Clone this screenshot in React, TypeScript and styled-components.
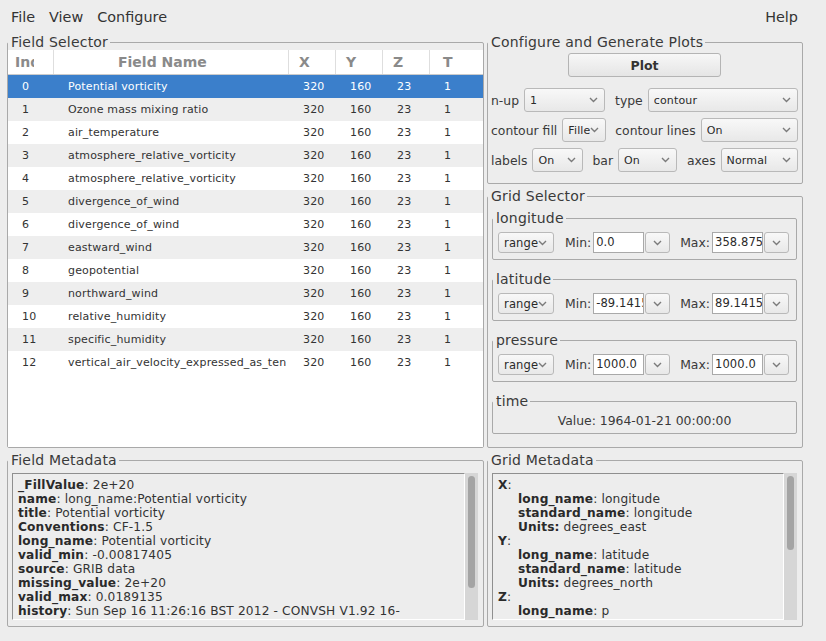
import React from 'react'
import styled, { createGlobalStyle } from 'styled-components'

const GlobalStyle = createGlobalStyle`
  html, body {
    margin: 0;
    padding: 0;
    background: #ededed;
  }
  body {
    font-family: "DejaVu Sans", "Liberation Sans", sans-serif;
    color: #333;
  }
`

const Window = styled.div`
  width: 826px;
  height: 641px;
  overflow: hidden;
  background: #ededed;
`

const MenuBar = styled.div`
  display: flex;
  align-items: center;
  height: 34px;
  padding: 0 21px 0 4px;
  font-size: 14.4px;
  color: #333;
`

const MenuItem = styled.span<{ $push?: boolean }>`
  padding: 0 7px;
  margin-left: ${(p) => (p.$push ? 'auto' : '0')};
`

const Main = styled.div`
  display: grid;
  grid-template-columns: 477px 316px;
  grid-template-rows: 414px 175px;
  column-gap: 3px;
  row-gap: 4px;
  padding-left: 7px;
`

const Column = styled.div`
  display: flex;
  flex-direction: column;
  gap: 4px;
  min-height: 0;
`

const Panel = styled.fieldset<{ $h?: number }>`
  margin: 0;
  padding: 0;
  min-width: 0;
  min-height: 0;
  border: 1px solid #a9a9a9;
  border-radius: 2px;
  display: flex;
  flex-direction: column;
  ${(p) => (p.$h ? `height: ${p.$h}px; flex: none;` : 'flex: 1;')}
  box-sizing: border-box;
`

const Legend = styled.legend`
  margin: 0;
  padding: 0 2px 0 3px;
  font-size: 14px;
  letter-spacing: 0.2px;
  line-height: 16px;
  color: #3a3a3a;
`

/* ---------- table ---------- */

const cols = '46px 235px 47px 47px 47px 1fr'

const Table = styled.div`
  flex: 1;
  background: #fff;
  display: flex;
  flex-direction: column;
  overflow: hidden;
`

const HeaderRow = styled.div`
  display: grid;
  grid-template-columns: ${cols};
  height: 25px;
  box-sizing: border-box;
  border-bottom: 1px solid #cbcbcb;
`

const HeaderCell = styled.div<{ $pad: number; $last?: boolean }>`
  padding-left: ${(p) => p.$pad}px;
  border-right: ${(p) => (p.$last ? 'none' : '1px solid #dedede')};
  font-weight: bold;
  font-size: 14px;
  line-height: 24px;
  color: #8a8a8a;
  overflow: hidden;
  white-space: nowrap;
`

const HeaderClip = styled.span`
  display: inline-block;
  width: 19px;
  overflow: hidden;
  vertical-align: top;
`

const Row = styled.div<{ $alt: boolean; $sel: boolean }>`
  display: grid;
  grid-template-columns: ${cols};
  height: 23px;
  flex: none;
  background: ${(p) => (p.$sel ? '#3b7fcb' : p.$alt ? '#eeeeee' : '#ffffff')};
  color: ${(p) => (p.$sel ? '#ffffff' : '#333333')};
  font-size: 11px;
  letter-spacing: 0.15px;
  line-height: 23px;
`

const Cell = styled.div`
  padding-left: 14px;
  white-space: nowrap;
  overflow: hidden;
`

/* ---------- controls ---------- */

const ConfigBody = styled.div`
  padding: 3px 4px 0 3px;
  display: flex;
  flex-direction: column;
`

const PlotButton = styled.button`
  align-self: center;
  width: 153px;
  height: 24px;
  border: 1px solid #b4b4b4;
  border-radius: 3px;
  background: linear-gradient(#f7f7f7, #e5e5e5);
  font-family: inherit;
  font-weight: bold;
  font-size: 12.5px;
  color: #333;
  padding: 0;
`

const FormRow = styled.div<{ $first?: boolean }>`
  display: flex;
  align-items: center;
  gap: 5px;
  height: 24px;
  margin-top: ${(p) => (p.$first ? 11 : 6)}px;
`

const Label = styled.span<{ $ml?: number }>`
  margin-left: ${(p) => p.$ml ?? 0}px;
  white-space: nowrap;
  color: #3a3a3a;
  font-size: 12.4px;
`

const Combo = styled.div<{ $w?: number; $h?: number; $fs?: number }>`
  display: flex;
  align-items: center;
  box-sizing: border-box;
  ${(p) => (p.$w ? `width: ${p.$w}px; flex: none;` : 'flex: 1;')}
  height: ${(p) => p.$h ?? 24}px;
  padding: 0 6px 0 5px;
  border: 1px solid #b9b9b9;
  border-radius: 3px;
  background: linear-gradient(#f8f8f8, #e8e8e8);
  font-size: ${(p) => p.$fs ?? 11}px;
  letter-spacing: 0.15px;
  color: #2a2a2a;
`

const ComboText = styled.span`
  flex: 1;
  min-width: 0;
  overflow: hidden;
  white-space: nowrap;
`

const ArrowButton = styled.div`
  display: flex;
  align-items: center;
  justify-content: center;
  width: 25px;
  height: 21px;
  margin-left: 1px;
  box-sizing: border-box;
  border: 1px solid #b9b9b9;
  border-radius: 3px;
  background: linear-gradient(#f8f8f8, #e8e8e8);
`

const TextField = styled.div`
  width: 51px;
  height: 21px;
  margin-left: 2px;
  box-sizing: border-box;
  border: 1px solid #a9a9a9;
  background: #fff;
  padding-left: 2px;
  font-size: 11.5px;
  letter-spacing: 0.1px;
  line-height: 19px;
  color: #2a2a2a;
  white-space: nowrap;
  overflow: hidden;
`

const GridBody = styled.div`
  padding: 6px 5px 0 4px;
  display: flex;
  flex-direction: column;
  gap: 11px;
`

const RangeRow = styled.div`
  display: flex;
  align-items: center;
  padding: 6px 5px 6px 5px;
`

const TimeValue = styled.div`
  text-align: center;
  font-size: 12.4px;
  line-height: 16px;
  padding: 4px 0 4px;
  color: #3a3a3a;
`

/* ---------- metadata ---------- */

const MetaBody = styled.div`
  flex: 1;
  display: flex;
  padding: 5px 5px 6px 4px;
  min-height: 0;
`

const TextView = styled.div`
  flex: 1;
  min-width: 0;
  border-top: 1px solid #8f8f8f;
  border-left: 1px solid #8f8f8f;
  border-right: 1px solid #ffffff;
  border-bottom: 1px solid #ffffff;
  padding: 4px 5px;
  overflow: hidden;
  font-size: 12.2px;
  letter-spacing: 0.14px;
  line-height: 14px;
  color: #333;
`

const MetaLine = styled.div<{ $indent?: boolean }>`
  white-space: nowrap;
  padding-left: ${(p) => (p.$indent ? 20 : 0)}px;
  b {
    color: #2a2a2a;
  }
`

const Scrollbar = styled.div`
  width: 13px;
  flex: none;
  background: #d6d6d6;
  padding: 3px;
  box-sizing: border-box;
`

const Thumb = styled.div<{ $h: number }>`
  height: ${(p) => p.$h}px;
  background: #a4a4a4;
  border-radius: 4px;
`

const Chevron: React.FC = () => (
  <svg width="9" height="6" viewBox="0 0 9 6">
    <polyline points="1,1 4.5,4.5 8,1" fill="none" stroke="#7b7b7b" strokeWidth="1.4" />
  </svg>
)

const fields = [
  'Potential vorticity',
  'Ozone mass mixing ratio',
  'air_temperature',
  'atmosphere_relative_vorticity',
  'atmosphere_relative_vorticity',
  'divergence_of_wind',
  'divergence_of_wind',
  'eastward_wind',
  'geopotential',
  'northward_wind',
  'relative_humidity',
  'specific_humidity',
  'vertical_air_velocity_expressed_as_ten',
]

const fieldMeta: [string, string][] = [
  ['_FillValue', '2e+20'],
  ['name', 'long_name:Potential vorticity'],
  ['title', 'Potential vorticity'],
  ['Conventions', 'CF-1.5'],
  ['long_name', 'Potential vorticity'],
  ['valid_min', '-0.00817405'],
  ['source', 'GRIB data'],
  ['missing_value', '2e+20'],
  ['valid_max', '0.0189135'],
  ['history', 'Sun Sep 16 11:26:16 BST 2012 - CONVSH V1.92 16-'],
]

const gridMeta = [
  { axis: 'X', name: 'longitude', std: 'longitude', units: 'degrees_east' },
  { axis: 'Y', name: 'latitude', std: 'latitude', units: 'degrees_north' },
  { axis: 'Z', name: 'p', std: 'pressure', units: 'hPa' },
]

const ranges = [
  { name: 'longitude', min: '0.0', max: '358.875' },
  { name: 'latitude', min: '-89.14159', max: '89.14159' },
  { name: 'pressure', min: '1000.0', max: '1000.0' },
]

const FieldTable: React.FC = () => (
  <Table>
    <HeaderRow>
      <HeaderCell $pad={7}>
        <HeaderClip>Index</HeaderClip>
      </HeaderCell>
      <HeaderCell $pad={64}>Field Name</HeaderCell>
      <HeaderCell $pad={10}>X</HeaderCell>
      <HeaderCell $pad={10}>Y</HeaderCell>
      <HeaderCell $pad={10}>Z</HeaderCell>
      <HeaderCell $pad={13} $last>
        T
      </HeaderCell>
    </HeaderRow>
    {fields.map((f, i) => (
      <Row key={i} $alt={i % 2 === 1} $sel={i === 0}>
        <Cell>{i}</Cell>
        <Cell>{f}</Cell>
        <Cell>320</Cell>
        <Cell>160</Cell>
        <Cell>23</Cell>
        <Cell>1</Cell>
      </Row>
    ))}
  </Table>
)

const ConfigPanel: React.FC = () => (
  <Panel $h={150}>
    <Legend>Configure and Generate Plots</Legend>
    <ConfigBody>
      <PlotButton>Plot</PlotButton>
      <FormRow $first>
        <Label>n-up</Label>
        <Combo $w={81}>
          <ComboText>1</ComboText>
          <Chevron />
        </Combo>
        <Label $ml={5}>type</Label>
        <Combo>
          <ComboText>contour</ComboText>
          <Chevron />
        </Combo>
      </FormRow>
      <FormRow>
        <Label>contour fill</Label>
        <Combo $w={44}>
          <ComboText>Filled</ComboText>
          <Chevron />
        </Combo>
        <Label $ml={4}>contour lines</Label>
        <Combo>
          <ComboText>On</ComboText>
          <Chevron />
        </Combo>
      </FormRow>
      <FormRow>
        <Label>labels</Label>
        <Combo $w={51}>
          <ComboText>On</ComboText>
          <Chevron />
        </Combo>
        <Label $ml={4}>bar</Label>
        <Combo $w={59}>
          <ComboText>On</ComboText>
          <Chevron />
        </Combo>
        <Label $ml={5}>axes</Label>
        <Combo>
          <ComboText>Normal</ComboText>
          <Chevron />
        </Combo>
      </FormRow>
    </ConfigBody>
  </Panel>
)

const GridSelector: React.FC = () => (
  <Panel>
    <Legend>Grid Selector</Legend>
    <GridBody>
      {ranges.map((r) => (
        <Panel key={r.name} $h={50}>
          <Legend>{r.name}</Legend>
          <RangeRow>
            <Combo $w={56} $h={21} $fs={11.5}>
              <ComboText>range</ComboText>
              <Chevron />
            </Combo>
            <Label $ml={11}>Min:</Label>
            <TextField>{r.min}</TextField>
            <ArrowButton>
              <Chevron />
            </ArrowButton>
            <Label $ml={10}>Max:</Label>
            <TextField>{r.max}</TextField>
            <ArrowButton>
              <Chevron />
            </ArrowButton>
          </RangeRow>
        </Panel>
      ))}
      <Panel $h={41}>
        <Legend>time</Legend>
        <TimeValue>Value: 1964-01-21 00:00:00</TimeValue>
      </Panel>
    </GridBody>
  </Panel>
)

const FieldMetadata: React.FC = () => (
  <Panel>
    <Legend>Field Metadata</Legend>
    <MetaBody>
      <TextView>
        {fieldMeta.map(([k, v]) => (
          <MetaLine key={k}>
            <b>{k}</b>: {v}
          </MetaLine>
        ))}
        <MetaLine>July-2009</MetaLine>
      </TextView>
      <Scrollbar>
        <Thumb $h={112} />
      </Scrollbar>
    </MetaBody>
  </Panel>
)

const GridMetadata: React.FC = () => (
  <Panel>
    <Legend>Grid Metadata</Legend>
    <MetaBody>
      <TextView>
        {gridMeta.map((g) => (
          <React.Fragment key={g.axis}>
            <MetaLine>
              <b>{g.axis}</b>:
            </MetaLine>
            <MetaLine $indent>
              <b>long_name</b>: {g.name}
            </MetaLine>
            <MetaLine $indent>
              <b>standard_name</b>: {g.std}
            </MetaLine>
            <MetaLine $indent>
              <b>Units:</b> {g.units}
            </MetaLine>
          </React.Fragment>
        ))}
      </TextView>
      <Scrollbar>
        <Thumb $h={74} />
      </Scrollbar>
    </MetaBody>
  </Panel>
)

const App: React.FC = () => {
  return (
    <Window>
      <GlobalStyle />
      <MenuBar>
        <MenuItem>File</MenuItem>
        <MenuItem>View</MenuItem>
        <MenuItem>Configure</MenuItem>
        <MenuItem $push>Help</MenuItem>
      </MenuBar>
      <Main>
        <Panel>
          <Legend>Field Selector</Legend>
          <FieldTable />
        </Panel>
        <Column>
          <ConfigPanel />
          <GridSelector />
        </Column>
        <FieldMetadata />
        <GridMetadata />
      </Main>
    </Window>
  )
}

export default App
